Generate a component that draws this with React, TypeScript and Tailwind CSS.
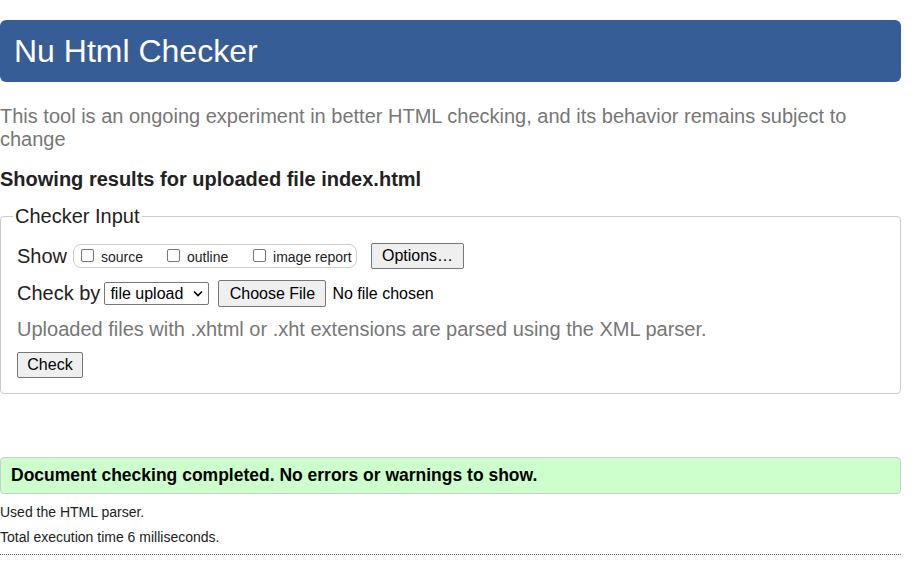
const font = "font-['Liberation_Sans',Arial,sans-serif]";

function Checkbox() {
  return (
    <span className="mb-[3px] mr-[7px] inline-block h-[13px] w-[13px] shrink-0 rounded-[2px] border border-[#767676] bg-white" />
  );
}

function Button({ label, className = '' }: { label: string; className?: string }) {
  return (
    <span
      className={`flex items-center justify-center rounded-[2px] border border-[#767676] bg-[#efefef] text-[16px] text-black ${className}`}
    >
      {label}
    </span>
  );
}

export default function App() {
  return (
    <div className={`${font} w-[901px] bg-white text-[#222]`}>
      {/* Header */}
      <div className="mt-[20px] flex h-[62px] items-center rounded-[6px] bg-[#365d95] px-[14px] text-[32px] text-white">
        Nu Html Checker
      </div>

      <p className="mt-[23px] text-[20px] leading-[23px] text-[#777]">
        This tool is an ongoing experiment in better HTML checking, and its behavior remains subject to change
      </p>

      <h2 className="mt-[17px] text-[20px] font-bold leading-[23px] text-[#222]">
        Showing results for uploaded file index.html
      </h2>

      <fieldset className="mt-[14px] rounded-[4px] border border-[#ccc] pb-[15px] pl-[12px] pr-[12px]">
        <legend className="px-[2px] text-[20px] leading-[23px] text-[#222]">Checker Input</legend>

        <div className="pl-[4px] pt-[15px]">
          {/* Show row */}
          <div className="flex h-[26px] items-center">
            <span className="text-[20px] leading-[23px]">Show</span>
            <div className="ml-[6px] flex h-[24px] w-[284px] items-center rounded-[8px] border border-[#ccc] pl-[7px] pt-[2px] text-[14px] text-[#222]">
              <label className="flex w-[86px] items-center">
                <Checkbox />
                source
              </label>
              <label className="flex w-[86px] items-center">
                <Checkbox />
                outline
              </label>
              <label className="flex items-center">
                <Checkbox />
                image report
              </label>
            </div>
            <Button label="Options…" className="ml-[14px] h-[26px] w-[93px]" />
          </div>

          {/* Check by row */}
          <div className="mt-[11px] flex h-[27px] items-center">
            <span className="text-[20px] leading-[23px]">Check by</span>
            <span className="ml-[4px] flex h-[23px] w-[105px] items-center justify-between rounded-[2px] border border-[#767676] pl-[5px] pr-[5px] text-[16px] text-black">
              file upload
              <svg width="10" height="7" viewBox="0 0 10 7" fill="none">
                <path d="M1 1.5L5 5.5L9 1.5" stroke="#000" strokeWidth="1.6" />
              </svg>
            </span>
            <Button label="Choose File" className="ml-[9px] h-[27px] w-[108px]" />
            <span className="ml-[6px] text-[16px] text-black">No file chosen</span>
          </div>

          <p className="mt-[11px] text-[20px] leading-[23px] text-[#777]">
            Uploaded files with .xhtml or .xht extensions are parsed using the XML parser.
          </p>

          <Button label="Check" className="mt-[11px] h-[26px] w-[66px]" />
        </div>
      </fieldset>

      {/* Result */}
      <div className="mt-[63px] flex h-[37px] items-center rounded-[4px] border border-[#ccc] bg-[#ccffcc] px-[10px] text-[17.5px] font-bold text-black">
        Document checking completed. No errors or warnings to show.
      </div>

      <p className="mt-[9px] text-[14px] leading-[19px] text-[#222]">Used the HTML parser.</p>
      <p className="mt-[6px] text-[14px] leading-[19px] text-[#222]">Total execution time 6 milliseconds.</p>
      <hr className="mt-[7px] border-0 border-t border-dotted border-[#666]" />
    </div>
  );
}
